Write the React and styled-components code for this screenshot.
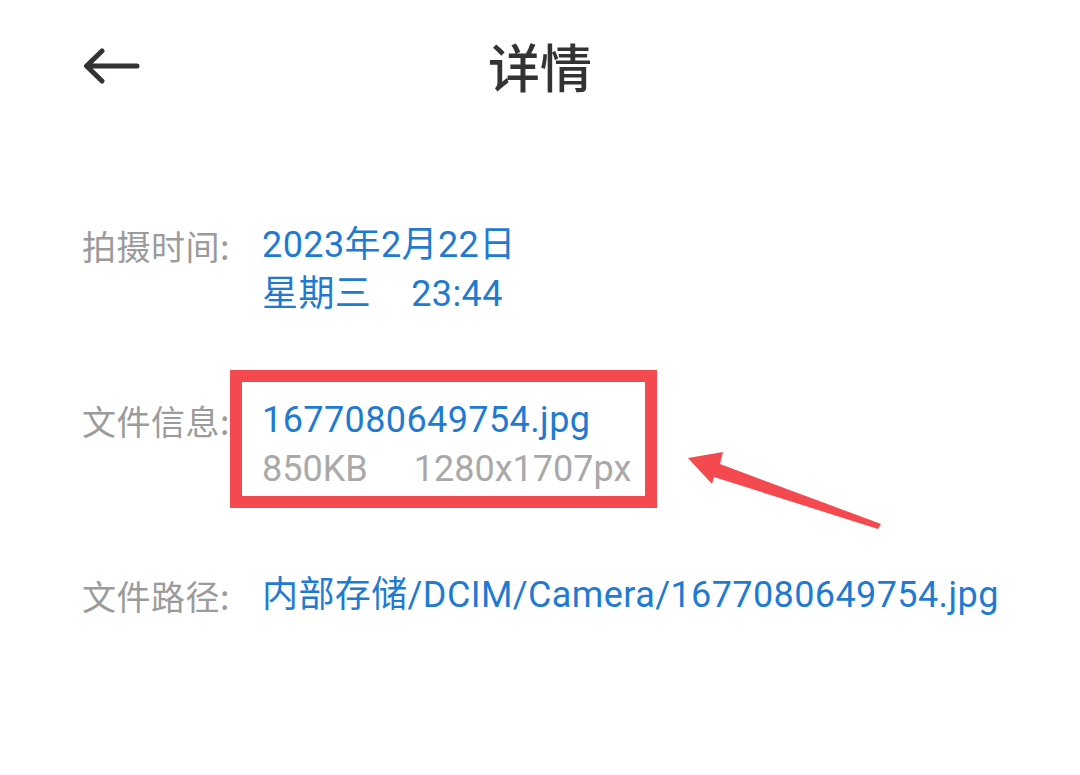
import React from "react";
import styled, { createGlobalStyle } from "styled-components";

const GlobalStyle = createGlobalStyle`
  html, body {
    margin: 0;
    padding: 0;
    background: #ffffff;
  }
  body {
    font-family: Roboto, "Noto Sans CJK SC", sans-serif;
  }
`;

const Page = styled.main`
  width: 1080px;
  height: 775px;
  background: #ffffff;
  overflow: hidden;
`;

const Header = styled.header`
  display: grid;
  grid-template-columns: 1fr auto 1fr;
  align-items: center;
  padding: 36px 82px 0;
  height: 60px;
`;

const BackButton = styled.button`
  justify-self: start;
  display: flex;
  align-items: center;
  padding: 0;
  border: 0;
  background: none;
  color: #333333;
  cursor: pointer;
`;

const Title = styled.h1`
  margin: 0;
  font-size: 52px;
  line-height: 60px;
  font-weight: 500;
  color: #333333;
  font-family: "Noto Sans CJK SC", sans-serif;
`;

const Details = styled.section`
  display: flex;
  flex-direction: column;
  gap: 77px;
  padding: 125px 0 0 82px;
`;

const Row = styled.div`
  display: grid;
  grid-template-columns: 180px 1fr;
  font-size: 36px;
  line-height: 49px;
`;

const Label = styled.div`
  color: #9b9b9b;
  font-family: "Noto Sans CJK SC", sans-serif;
  font-size: 34px;
  letter-spacing: 0.5px;
`;

const Value = styled.div`
  position: relative;
  display: flex;
  flex-direction: column;
  color: #1f7bd2;
  white-space: nowrap;
  letter-spacing: 0.4px;
`;

const Line = styled.div`
  display: flex;
  gap: ${(p) => p.$gap || 0}px;
  color: ${(p) => (p.$muted ? "#a9a9a9" : "inherit")};
  letter-spacing: ${(p) => (p.$muted ? "0" : "inherit")};
`;

const Highlight = styled.span`
  position: absolute;
  left: -32px;
  top: -26px;
  width: 427px;
  height: 138px;
  box-sizing: border-box;
  border: 12px solid #f44a4f;
  pointer-events: none;
`;

const Pointer = styled.svg`
  position: absolute;
  left: 422px;
  top: 52px;
`;

const BackIcon = () => (
  <svg width="58" height="36" viewBox="0 0 58 36" fill="none">
    <path
      d="M55 18H5M20 3L4.5 18L20 33"
      stroke="currentColor"
      strokeWidth="5"
      strokeLinecap="round"
      strokeLinejoin="round"
    />
  </svg>
);

export default function App() {
  return (
    <Page>
      <GlobalStyle />
      <Header>
        <BackButton aria-label="返回">
          <BackIcon />
        </BackButton>
        <Title>详情</Title>
        <span />
      </Header>

      <Details>
        <Row>
          <Label>拍摄时间:</Label>
          <Value>
            <Line>2023年2月22日</Line>
            <Line $gap={40}>
              <span>星期三</span>
              <span>23:44</span>
            </Line>
          </Value>
        </Row>

        <Row>
          <Label>文件信息:</Label>
          <Value>
            <Line>1677080649754.jpg</Line>
            <Line $muted $gap={46}>
              <span>850KB</span>
              <span>1280x1707px</span>
            </Line>
            <Highlight />
            <Pointer width="200" height="85" viewBox="0 0 200 85">
              <polygon
                points="4,10 39,4 36,16 197,76 194,81 30,29 28,36"
                fill="#f44a4f"
              />
            </Pointer>
          </Value>
        </Row>

        <Row>
          <Label>文件路径:</Label>
          <Value>
            <Line>内部存储/DCIM/Camera/1677080649754.jpg</Line>
          </Value>
        </Row>
      </Details>
    </Page>
  );
}
